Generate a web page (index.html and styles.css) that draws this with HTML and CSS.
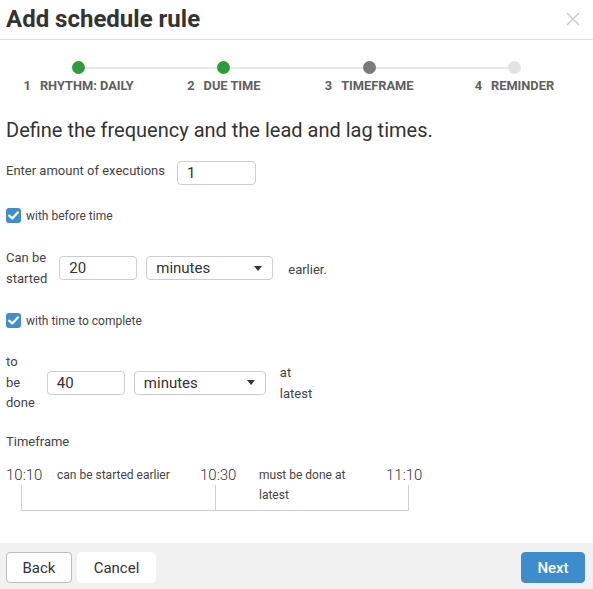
FILE: index.html
```html
<!DOCTYPE html>
<html>
<head>
<meta charset="utf-8">
<link rel="stylesheet" href="styles.css">
</head>
<body>
<div class="dialog">
  <div class="header">
    <h1 class="title">Add schedule rule</h1>
    <svg class="close" width="14" height="14" viewBox="0 0 14 14"><path d="M1 1L13 13M13 1L1 13" stroke="#c8c8c8" stroke-width="1.3" fill="none"/></svg>
  </div>
  <div class="steps">
    <div class="step"><span class="dot done"></span><span class="step-label"><span class="num">1</span>RHYTHM: DAILY</span></div>
    <div class="step"><span class="dot done"></span><span class="step-label"><span class="num">2</span>DUE TIME</span></div>
    <div class="step"><span class="dot current"></span><span class="step-label"><span class="num">3</span>TIMEFRAME</span></div>
    <div class="step"><span class="dot todo"></span><span class="step-label"><span class="num">4</span>REMINDER</span></div>
  </div>
  <div class="content">
    <h2 class="heading">Define the frequency and the lead and lag times.</h2>
    <div class="row exec-row">
      <span class="label">Enter amount of executions</span>
      <div class="input exec-input">1</div>
    </div>
    <div class="check-row check1">
      <span class="checkbox"><svg width="11" height="9" viewBox="0 0 11 9"><path d="M1.2 4.6L4.2 7.4L9.8 1.4" stroke="#fff" stroke-width="2.2" fill="none" stroke-linecap="round" stroke-linejoin="round"/></svg></span>
      <span class="check-label">with before time</span>
    </div>
    <div class="row field-row row-before">
      <span class="narrow">Can be started</span>
      <div class="input num-input">20</div>
      <div class="select sel1"><span>minutes</span><span class="caret"></span></div>
      <span class="after after1">earlier.</span>
    </div>
    <div class="check-row check2">
      <span class="checkbox"><svg width="11" height="9" viewBox="0 0 11 9"><path d="M1.2 4.6L4.2 7.4L9.8 1.4" stroke="#fff" stroke-width="2.2" fill="none" stroke-linecap="round" stroke-linejoin="round"/></svg></span>
      <span class="check-label">with time to complete</span>
    </div>
    <div class="row field-row row-done">
      <span class="narrow narrow3">to be done</span>
      <div class="input num-input">40</div>
      <div class="select sel2"><span>minutes</span><span class="caret"></span></div>
      <span class="after after2">at latest<sup class="tick">`</sup></span>
    </div>
    <div class="tf-title">Timeframe</div>
    <div class="timeline">
      <div class="tl-row">
        <span class="time t1">10:10</span>
        <span class="desc d1">can be started earlier</span>
        <span class="time t2">10:30</span>
        <span class="desc d2">must be done at latest</span>
        <span class="time t3">11:10</span>
      </div>
      <div class="bracket"><div class="bracket-left"></div></div>
    </div>
  </div>
  <div class="footer">
    <button class="btn back">Back</button>
    <button class="btn cancel">Cancel</button>
    <button class="btn next">Next</button>
  </div>
</div>
</body>
</html>
```
FILE: styles.css
```css
* { box-sizing: border-box; }
html, body { margin: 0; padding: 0; }
body {
  font-family: Roboto, "Liberation Sans", sans-serif;
  color: #333;
  background: #fff;
}
.dialog {
  display: flex;
  flex-direction: column;
  min-height: 589px;
}
.header {
  height: 40px;
  border-bottom: 1px solid #e2e2e2;
  display: flex;
  align-items: center;
  justify-content: space-between;
  padding: 0 13px 2px 6px;
}
.title {
  margin: 0;
  font-size: 24px;
  font-weight: 700;
  color: #333;
  line-height: 28px;
}
.close { display: block; margin-top: 0; }

.steps {
  position: relative;
  display: grid;
  grid-template-columns: repeat(4, 1fr);
  padding: 21px 6px 0;
}
.steps::before {
  content: "";
  position: absolute;
  top: 27px;
  left: 78px;
  right: 80px;
  height: 2px;
  background: #e8e8e8;
}
.step {
  display: flex;
  flex-direction: column;
  align-items: center;
  position: relative;
}
.dot {
  width: 13px;
  height: 13px;
  border-radius: 50%;
  display: block;
}
.dot.done { background: #2e9c3a; }
.dot.current { background: #7a7a7a; }
.dot.todo { background: #e3e3e3; }
.step-label {
  margin-top: 4px;
  font-size: 12.8px;
  line-height: 15px;
  font-weight: 700;
  color: #606060;
  white-space: nowrap;
}
.num { margin-right: 9px; }

.content {
  padding: 0 6px;
  display: flex;
  flex-direction: column;
  align-items: flex-start;
}
.heading {
  margin: 27px 0 0;
  font-size: 20px;
  line-height: 20px;
  font-weight: 400;
  color: #333;
}
.row {
  display: flex;
  align-items: center;
}
.label, .narrow, .after {
  font-size: 13px;
  color: #444;
}
.exec-row { margin-top: 21px; }
.exec-row .label { margin-right: 12px; margin-top: -5px; }
.input {
  height: 24px;
  border: 1px solid #cdcdcd;
  border-radius: 4px;
  font-size: 15px;
  line-height: 22px;
  padding-left: 9px;
  color: #333;
}
.exec-input { width: 79px; }
.check-row {
  display: flex;
  align-items: center;
  height: 15px;
}
.check1 { margin-top: 23px; }
.check2 { margin-top: 24px; }
.checkbox {
  width: 15px;
  height: 15px;
  border-radius: 3px;
  background: #3e8ed0;
  display: flex;
  align-items: center;
  justify-content: center;
}
.check-label {
  margin-left: 5px;
  font-size: 12px;
  color: #444;
}
.narrow {
  width: min-content;
  line-height: 21px;
  margin-right: 12px;
}
.narrow3 { line-height: 20.5px; }
.row-before { margin-top: 24px; }
.row-done { margin-top: 24px; }
.num-input { width: 78px; }
.select {
  height: 24px;
  border: 1px solid #cdcdcd;
  border-radius: 4px;
  font-size: 15px;
  padding: 0 10px 0 9px;
  display: flex;
  align-items: center;
  justify-content: space-between;
  color: #333;
  margin-left: 9px;
}
.sel1 { width: 127px; }
.sel2 { width: 132px; }
.caret {
  width: 0;
  height: 0;
  border-left: 4.5px solid transparent;
  border-right: 4.5px solid transparent;
  border-top: 5px solid #333;
}
.after {
  line-height: 21px;
}
.after1 { margin-left: 15px; margin-top: 2px; }
.after2 { margin-left: 14px; width: min-content; }
.tick { font-size: 8px; color: #999; vertical-align: top; line-height: 14px; }

.tf-title {
  margin-top: 19px;
  font-size: 13px;
  line-height: 18px;
  color: #444;
}
.timeline { margin-top: 14px; }
.tl-row {
  display: flex;
  align-items: flex-start;
}
.time {
  font-size: 15px;
  line-height: 20px;
  font-weight: 300;
  color: #333;
}
.t1 { width: 51px; }
.t2 { width: 59px; }
.desc {
  font-size: 12px;
  line-height: 20px;
  color: #444;
}
.d1 { width: 143px; }
.d2 { width: 127px; padding-right: 32px; }
.bracket {
  margin-top: -20px;
  margin-left: 15px;
  width: 388px;
  height: 26px;
  border: 1px solid #cfcfcf;
  border-top: none;
  display: flex;
}
.bracket-left {
  width: 194px;
  border-right: 1px solid #cfcfcf;
}

.footer {
  margin-top: auto;
  height: 46px;
  background: #f1f1f1;
  display: flex;
  align-items: flex-start;
  padding: 9px 8px 0 6px;
}
.btn {
  height: 31px;
  border-radius: 4px;
  font-family: Roboto, "Liberation Sans", sans-serif;
  font-size: 15px;
  color: #333;
  background: #fff;
  border: 1px solid #fff;
  padding: 0;
}
.back { width: 66px; border-color: #bdbdbd; }
.cancel { width: 79px; margin-left: 5px; }
.next {
  width: 64px;
  margin-left: auto;
  background: #3d8dcd;
  border-color: #3d8dcd;
  color: #fff;
  font-weight: 500;
}
```
